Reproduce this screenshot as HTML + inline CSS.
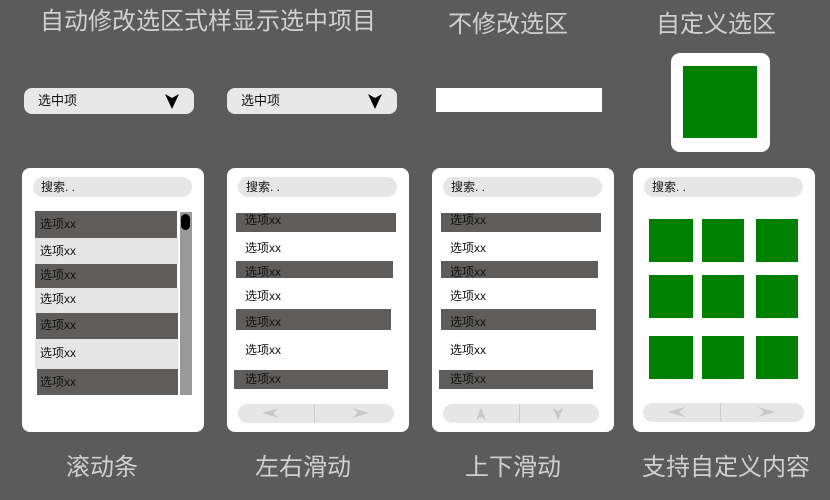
<!DOCTYPE html><html><head><meta charset="utf-8"><style>
*{margin:0;padding:0;box-sizing:border-box}
body{width:830px;height:500px;background:#5b5b5b;position:relative;overflow:hidden;font-family:"Liberation Sans","Noto Sans CJK SC",sans-serif}
div,span{position:absolute}
.t{color:#d0d0d0;font-size:24px;white-space:nowrap;transform:translateX(-50%);line-height:28px}
.card{background:#fff;border-radius:8px}
.s{background:#e6e6e6;border-radius:10px;height:20px;font-size:12px;line-height:20px;padding-left:8px;color:#111}
.d{background:#5f5d5b}
.l{background:#e6e6e6}
.x{font-size:12px;color:#111;line-height:14px;white-space:nowrap}
.dd{background:#e8e8e8;border-radius:8px;height:26px;width:170px;font-size:13px;line-height:26px;padding-left:14px;color:#111}
.g{background:#008000}
.nav{background:#e6e6e6;border-radius:10px;height:19px}
</style></head><body>
<div class="t" style="left:208px;top:8px">自动修改选区式样显示选中项目</div>
<div class="t" style="left:508px;top:11px">不修改选区</div>
<div class="t" style="left:716px;top:11px">自定义选区</div>
<div class="t" style="left:102px;top:454px">滚动条</div>
<div class="t" style="left:303px;top:454px">左右滑动</div>
<div class="t" style="left:513px;top:454px">上下滑动</div>
<div class="t" style="left:726px;top:454px">支持自定义内容</div>

<div class="dd" style="left:24px;top:88px">选中项<svg style="position:absolute;left:141px;top:6px" width="14" height="15"><path d="M0 0 L7 4 L14 0 L7 15Z" fill="#000"/></svg></div>
<div class="dd" style="left:227px;top:88px">选中项<svg style="position:absolute;left:141px;top:6px" width="14" height="15"><path d="M0 0 L7 4 L14 0 L7 15Z" fill="#000"/></svg></div>
<div style="left:436px;top:88px;width:166px;height:24px;background:#fff"></div>
<div style="left:671px;top:53px;width:99px;height:99px;background:#fff;border-radius:9px"></div>
<div class="g" style="left:683px;top:66px;width:74px;height:72px"></div>

<!-- card 1 -->
<div class="card" style="left:22px;top:168px;width:182px;height:264px"></div>
<div class="s" style="left:33px;top:177px;width:159px">搜索. .</div>
<div class="d" style="left:35px;top:211px;width:142px;height:27px"></div>
<div class="l" style="left:35px;top:238px;width:143px;height:26px"></div>
<div class="d" style="left:35px;top:264px;width:142px;height:24px"></div>
<div class="l" style="left:35px;top:288px;width:143px;height:25px"></div>
<div class="d" style="left:36px;top:313px;width:142px;height:26px"></div>
<div class="l" style="left:35px;top:339px;width:143px;height:30px"></div>
<div class="d" style="left:37px;top:369px;width:141px;height:26px"></div>
<div style="left:180px;top:212px;width:12px;height:183px;background:#999"></div>
<div style="left:181px;top:214px;width:9px;height:16px;background:#000;border-radius:5px"></div>
<div class="x" style="left:40px;top:217px">选项xx</div>
<div class="x" style="left:40px;top:244px">选项xx</div>
<div class="x" style="left:40px;top:268px">选项xx</div>
<div class="x" style="left:40px;top:292px">选项xx</div>
<div class="x" style="left:40px;top:318px">选项xx</div>
<div class="x" style="left:40px;top:346px">选项xx</div>
<div class="x" style="left:40px;top:375px">选项xx</div>

<!-- card 2 -->
<div class="card" style="left:227px;top:168px;width:182px;height:264px"></div>
<div class="s" style="left:238px;top:177px;width:159px">搜索. .</div>
<div class="d" style="left:236px;top:213px;width:160px;height:19px"></div>
<div class="d" style="left:236px;top:261px;width:157px;height:17px"></div>
<div class="d" style="left:236px;top:309px;width:155px;height:21px"></div>
<div class="d" style="left:234px;top:370px;width:154px;height:19px"></div>
<div class="x" style="left:245px;top:213px">选项xx</div>
<div class="x" style="left:245px;top:241px">选项xx</div>
<div class="x" style="left:245px;top:265px">选项xx</div>
<div class="x" style="left:245px;top:289px">选项xx</div>
<div class="x" style="left:245px;top:315px">选项xx</div>
<div class="x" style="left:245px;top:343px">选项xx</div>
<div class="x" style="left:245px;top:372px">选项xx</div>
<div class="nav" style="left:238px;top:404px;width:156px"></div>
<div style="left:314px;top:404px;width:1px;height:19px;background:#ccc"></div>
<svg style="position:absolute;left:262px;top:408px" width="17" height="10"><path d="M0 5 L17 0 L11 5 L17 10Z" fill="#c8c8c8"/></svg>
<svg style="position:absolute;left:352px;top:408px" width="17" height="10"><path d="M17 5 L0 0 L6 5 L0 10Z" fill="#c8c8c8"/></svg>

<!-- card 3 -->
<div class="card" style="left:432px;top:168px;width:182px;height:264px"></div>
<div class="s" style="left:443px;top:177px;width:159px">搜索. .</div>
<div class="d" style="left:441px;top:213px;width:160px;height:19px"></div>
<div class="d" style="left:441px;top:261px;width:157px;height:17px"></div>
<div class="d" style="left:441px;top:309px;width:155px;height:21px"></div>
<div class="d" style="left:439px;top:370px;width:154px;height:19px"></div>
<div class="x" style="left:450px;top:213px">选项xx</div>
<div class="x" style="left:450px;top:241px">选项xx</div>
<div class="x" style="left:450px;top:265px">选项xx</div>
<div class="x" style="left:450px;top:289px">选项xx</div>
<div class="x" style="left:450px;top:315px">选项xx</div>
<div class="x" style="left:450px;top:343px">选项xx</div>
<div class="x" style="left:450px;top:372px">选项xx</div>
<div class="nav" style="left:443px;top:404px;width:156px"></div>
<div style="left:519px;top:404px;width:1px;height:19px;background:#ccc"></div>
<svg style="position:absolute;left:476px;top:408px" width="10" height="12"><path d="M5 0 L10 12 L5 9 L0 12Z" fill="#c8c8c8"/></svg>
<svg style="position:absolute;left:553px;top:408px" width="10" height="12"><path d="M5 12 L10 0 L5 3 L0 0Z" fill="#c8c8c8"/></svg>

<!-- card 4 -->
<div class="card" style="left:633px;top:168px;width:182px;height:264px"></div>
<div class="s" style="left:644px;top:177px;width:159px">搜索. .</div>
<div class="g" style="left:649px;top:219px;width:44px;height:43px"></div>
<div class="g" style="left:702px;top:219px;width:42px;height:43px"></div>
<div class="g" style="left:756px;top:219px;width:42px;height:43px"></div>
<div class="g" style="left:649px;top:275px;width:44px;height:43px"></div>
<div class="g" style="left:702px;top:275px;width:42px;height:43px"></div>
<div class="g" style="left:756px;top:275px;width:42px;height:43px"></div>
<div class="g" style="left:649px;top:336px;width:44px;height:43px"></div>
<div class="g" style="left:702px;top:336px;width:42px;height:43px"></div>
<div class="g" style="left:756px;top:336px;width:42px;height:43px"></div>
<div class="nav" style="left:643px;top:403px;width:161px"></div>
<div style="left:720px;top:403px;width:1px;height:19px;background:#ccc"></div>
<svg style="position:absolute;left:668px;top:407px" width="17" height="10"><path d="M0 5 L17 0 L11 5 L17 10Z" fill="#c8c8c8"/></svg>
<svg style="position:absolute;left:758px;top:407px" width="17" height="10"><path d="M17 5 L0 0 L6 5 L0 10Z" fill="#c8c8c8"/></svg>
</body></html>
